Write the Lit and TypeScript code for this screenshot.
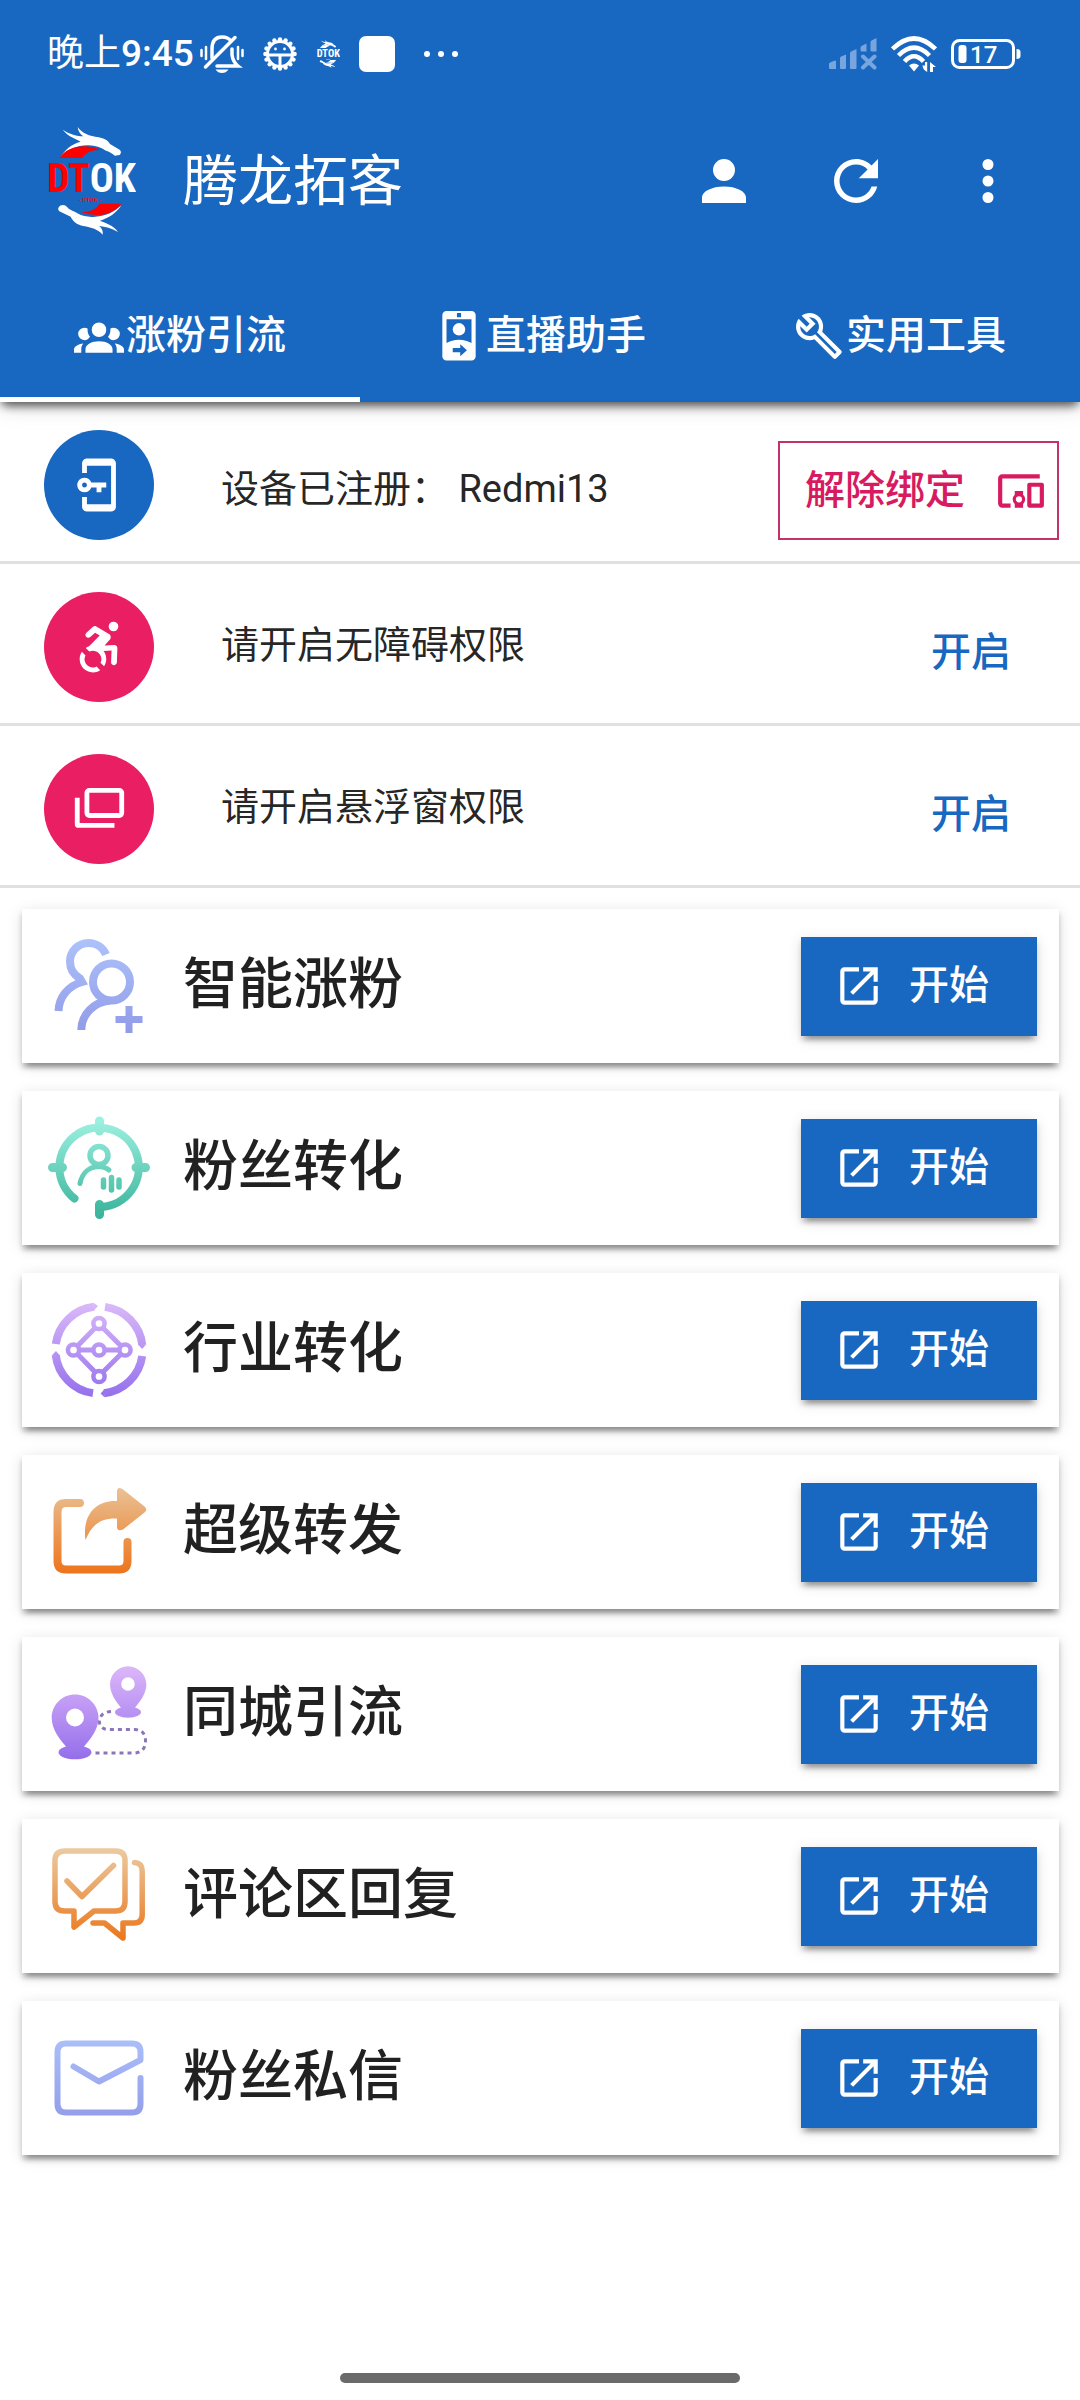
import { LitElement, html, svg, css, type SVGTemplateResult } from "lit";
import { customElement, state } from "lit/decorators.js";
import { classMap } from "lit/directives/class-map.js";

type Art = SVGTemplateResult;

/* ---------- 24-unit glyphs ---------- */

const glyphs: Record<string, Art> = {
  account: svg`<path d="M12 4A4 4 0 0 1 16 8A4 4 0 0 1 12 12A4 4 0 0 1 8 8A4 4 0 0 1 12 4M12 14C16.42 14 20 15.79 20 18V20H4V18C4 15.79 7.58 14 12 14Z"/>`,
  refresh: svg`<path d="M17.65 6.35C16.2 4.9 14.21 4 12 4A8 8 0 0 0 4 12A8 8 0 0 0 12 20C15.73 20 18.84 17.45 19.73 14H17.65C16.83 16.33 14.61 18 12 18A6 6 0 0 1 6 12A6 6 0 0 1 12 6C13.66 6 15.14 6.69 16.22 7.78L13 11H20V4L17.65 6.35Z"/>`,
  more: svg`<circle cx="12" cy="6" r="2"/><circle cx="12" cy="12" r="2"/><circle cx="12" cy="18" r="2"/>`,
  group: svg`<path d="M12,5.5A3.5,3.5 0 0,1 15.5,9A3.5,3.5 0 0,1 12,12.5A3.5,3.5 0 0,1 8.5,9A3.5,3.5 0 0,1 12,5.5M5,8C5.56,8 6.08,8.15 6.53,8.42C6.38,9.85 6.8,11.27 7.66,12.38C7.16,13.34 6.16,14 5,14A3,3 0 0,1 2,11A3,3 0 0,1 5,8M19,8A3,3 0 0,1 22,11A3,3 0 0,1 19,14C17.84,14 16.84,13.34 16.34,12.38C17.2,11.27 17.62,9.85 17.47,8.42C17.92,8.15 18.44,8 19,8M5.5,18.25C5.5,16.18 8.41,14.5 12,14.5C15.59,14.5 18.5,16.18 18.5,18.25V20H5.5V18.25M0,20V18.5C0,17.11 1.89,15.94 4.45,15.6C3.86,16.28 3.5,17.22 3.5,18.25V20H0M24,20H20.5V18.25C20.5,17.22 20.14,16.28 19.55,15.6C22.11,15.94 24,17.11 24,18.5V20Z"/>`,
  badge: svg`<path fill-rule="evenodd" d="M6 0H18A2 2 0 0 1 20 2V21.8A2 2 0 0 1 18 23.8H6A2 2 0 0 1 4 21.8V2A2 2 0 0 1 6 0M11 1V3H13V1ZM6 4V15.4C7.6 14.4 9.6 13.8 12 13.8S16.4 14.4 18 15.4V4ZM9 17.8V19.8H12.6V21.7L15.8 18.8L12.6 15.9V17.8Z"/><circle cx="12" cy="8.8" r="3"/>`,
  wrench: svg`<path d="M22.61 18.99l-9.08-9.08c.93-2.34.45-5.1-1.44-7C9.79.61 6.21.4 3.66 2.26L7.5 6.11 6.08 7.52 2.25 3.69C.39 6.23.6 9.82 2.9 12.11c1.86 1.86 4.57 2.35 6.89 1.48l9.11 9.11c.39.39 1.02.39 1.41 0l2.3-2.3c.4-.38.4-1.01 0-1.41zm-3 1.6l-9.46-9.46c-.61.45-1.29.72-2 .82-1.36.2-2.79-.21-3.83-1.25C3.37 9.76 2.93 8.5 3 7.26l3.09 3.09 4.24-4.24-3.09-3.09c1.24-.07 2.49.37 3.44 1.31 1.08 1.08 1.49 2.57 1.24 3.96-.12.71-.42 1.37-.88 1.96l9.45 9.45-.88.89z"/>`,
  key: svg`<path fill-rule="evenodd" d="M7 1C5.9 1 5 1.9 5 3V7H7V4H17V20H7V17H5V21C5 22.11 5.9 23 7 23H17C18.11 23 19 22.11 19 21V3C19 1.9 18.1 1 17 1H7M6 9C4.3 9 3 10.3 3 12S4.3 15 6 15C7.3 15 8.4 14.2 8.8 13H11V15H13V13H15V11H8.8C8.4 9.8 7.3 9 6 9M6 11C6.6 11 7 11.4 7 12S6.6 13 6 13S5 12.6 5 12S5.4 11 6 11Z"/>`,
  wheelchair: svg`<path d="M18.4,11.2L14.3,11.4L16.6,8.8C16.8,8.5 16.9,8 16.8,7.5C16.7,7.2 16.6,6.9 16.3,6.7L10.9,3.5C10.5,3.2 9.9,3.3 9.5,3.6L6.8,6.1C6.3,6.6 6.2,7.3 6.7,7.8C7.1,8.3 7.9,8.3 8.4,7.9L10.4,6.1L12.3,7.2L8.1,11.5C8,11.6 8,11.7 7.9,11.7C7.4,11.9 6.9,12.1 6.5,12.4L8,13.9C8.5,13.7 9,13.5 9.5,13.5C11.4,13.5 13,15.1 13,17C13,17.6 12.9,18.1 12.6,18.5L14.1,20C14.7,19.1 15,18.1 15,17C15,15.8 14.6,14.6 13.9,13.7L17.2,13.4L17,18.2C16.9,18.9 17.4,19.4 18.1,19.5H18.2C18.8,19.5 19.3,19 19.4,18.4L19.6,12.5C19.6,12.2 19.5,11.8 19.3,11.6C19,11.3 18.7,11.2 18.4,11.2M18,5.5A2,2 0 0,0 20,3.5A2,2 0 0,0 18,1.5A2,2 0 0,0 16,3.5A2,2 0 0,0 18,5.5M12.5,21.6C11.6,22.2 10.6,22.5 9.5,22.5C6.4,22.5 4,20.1 4,17C4,15.9 4.3,14.9 4.9,14L6.4,15.5C6.2,16 6,16.5 6,17C6,18.9 7.6,20.5 9.5,20.5C10.1,20.5 10.6,20.4 11,20.1L12.5,21.6Z"/>`,
  windows: svg`<g fill="none" stroke="currentColor" stroke-width="2"><rect x="7" y="4.3" width="14.4" height="10.4" rx="1"/><path d="M3 7.3V18.3Q3 18.8 3.5 18.8H18.4"/></g>`,
  devices: svg`<path fill-rule="evenodd" d="M3 6H21V4H3A2 2 0 0 0 1 6V18A2 2 0 0 0 3 20H7V18H3M13 12H9V13.78A3 3 0 0 0 8 16A3 3 0 0 0 9 18.22V20H13V18.22C13.61 17.67 14 16.88 14 16S13.61 14.33 13 13.78M11 17.5A1.5 1.5 0 1 1 12.5 16A1.5 1.5 0 0 1 11 17.5M22 8H16A1 1 0 0 0 15 9V19A1 1 0 0 0 16 20H22A1 1 0 0 0 23 19V9A1 1 0 0 0 22 8M21 18H17V10H21Z"/>`,
  open: svg`<path d="M14,3V5H17.59L7.76,14.83L9.17,16.24L19,6.41V10H21V3M19,19H5V5H12V3H5C3.89,3 3,3.9 3,5V19A2,2 0 0,0 5,21H19A2,2 0 0,0 21,19V12H19V19Z"/>`,
};

const glyph = (name: string, size: string) =>
  html`<svg class="glyph ${size}" viewBox="0 0 24 24" fill="currentColor" aria-hidden="true">${glyphs[name]}</svg>`;

/* ---------- brand mark ---------- */

const brand = (cls: string, red: string) => html`
  <svg class=${cls} viewBox="72 50 276 330" aria-hidden="true">
    <g fill="#fff">
      <path d="M120 146C134 122 154 104 182 97C170 88 146 84 128 61C148 75 172 80 190 81C180 74 174 64 173 53C186 72 208 80 236 84C252 87 262 92 270 104L300 122Q306 130 299 137L284 139C276 132 268 126 258 124C244 114 226 109 206 108C174 107 146 118 120 146Z"/>
      <path d="M304 288C290 310 268 326 240 334C252 340 280 346 294 368C274 356 256 352 238 350C246 358 250 366 248 376C234 360 214 354 190 350C172 346 160 338 152 322L118 306Q110 298 120 289Q134 284 142 294C150 304 164 306 172 312C190 322 208 324 226 322C258 320 284 308 304 288Z"/>
    </g>
    <g fill=${red}>
      <path d="M118 146C136 122 160 110 196 111Q222 112 244 122C218 122 200 126 186 146Z"/>
      <path d="M304 283C286 304 262 318 228 317Q204 317 184 308C208 308 226 302 238 283Z"/>
    </g>
    <text class="brand-word" x="209" y="249" text-anchor="end" fill=${red}>DT</text>
    <text class="brand-word" x="209" y="249" fill="#fff">OK</text>
    <text class="brand-sub" x="210" y="279" text-anchor="middle" fill=${red}>- DTOK -</text>
  </svg>`;

/* ---------- gradient feature artwork, 110-unit box ---------- */

const art: Record<string, { from: string; to: string; body: (paint: string) => Art }> = {
  fans: {
    from: "#adc2fb", to: "#919be8",
    body: (p) => svg`<g fill="none" stroke=${p} stroke-width="8">
      <path d="M62 23.5A19 19 0 0 0 44.5 12A18.5 18.5 0 0 0 26 30.5C26 38 30 44 36 47.5L38 51C24 55 15 66 14.5 80"/>
      <circle cx="67.500" cy="51" r="18.500"/>
      <path d="M66 69.500C50 71 37.500 83 37.300 99"/>
      <path stroke-width="7" d="M71.500 88.500H98.500M85 75V102"/></g>`,
  },
  target: {
    from: "#9cf0e0", to: "#3bb59c",
    body: (p) => svg`<g fill="none" stroke=${p} stroke-width="8" stroke-linecap="round">
      <path d="M30.500 85.500A39.700 39.700 0 1 1 57 94"/>
      <path stroke-width="9" d="M55.500 8V18M8.500 54.500H18.500M92 54.500H101.500M55.500 91.500V101.500"/>
      <circle cx="55" cy="42.500" r="9" stroke-width="5.500"/>
      <path stroke-width="5" d="M36 70.500C38 60 45 54 54 53.500C59 53.500 62 54.500 65 57"/>
      <path stroke-width="5.500" d="M59.500 67V74M67.500 64.500V77M75 67V74"/></g>`,
  },
  network: {
    from: "#dab9fa", to: "#9470ec",
    body: (p) => svg`<g fill="none" stroke=${p}>
      <g stroke-width="8">
        <path d="M11.800 49A43.500 43.500 0 0 1 50 11.800"/>
        <path d="M61 11.900A43.500 43.500 0 0 1 98.300 50"/>
        <path d="M98.200 61A43.500 43.500 0 0 1 60 98.200"/>
        <path d="M49 98.100A43.500 43.500 0 0 1 11.700 60"/>
      </g>
      <path stroke-width="5" d="M51 33L33.500 51M59 33L77 51M33.500 59L51 77M77 59L59 77M35 55H49M61 55H75"/>
      <g stroke-width="4.500"><circle cx="55" cy="28.500" r="5.600"/><circle cx="29.500" cy="55" r="5.600"/><circle cx="55" cy="55" r="5.600"/><circle cx="81" cy="55" r="5.600"/><circle cx="55" cy="81.500" r="5.600"/></g></g>
      <path fill=${p} d="M49.500 7.800L54 11L49.500 15.800ZM94.200 49.500L98 54L102.300 49.500ZM60.500 94.200L56.500 98.500L60.500 102.200ZM7.700 60.500L12 56L15.700 60.500Z"/>`,
  },
  share: {
    from: "#e9c49a", to: "#ee6f12",
    body: (p) => svg`<path fill="none" stroke=${p} stroke-width="8" stroke-linecap="round" d="M36 26H22Q13.500 26 13.500 35V84Q13.500 92.500 22 92.500H75Q83.500 92.500 83.500 84V65"/>
      <path fill=${p} d="M41.500 63C38 39 51 23 73 24V14Q73.500 9 78.500 12L100.500 29.500Q104 32.500 100.500 35.500L79 52.500Q73.500 55 73 50V41.500C57 41 48 47 41.500 63Z"/>`,
  },
  route: {
    from: "#dcb6fa", to: "#936dea",
    body: (p) => svg`<path fill="none" stroke="#8b76b8" stroke-width="3" stroke-dasharray="4 4" d="M67 52.500C52 53 52 70.500 64 70.500H91Q101.500 71 101.500 82T91 94H51"/>
      <path fill=${p} fill-rule="evenodd" d="M31 35.500C18 35.500 7.700 46 7.700 59C7.700 70 16 81 22 87.500A16.500 7 0 1 0 40 87.500C46 81 54.500 70 54.500 59C54.500 46 44 35.500 31 35.500M31 49.500A9 9 0 1 1 31 67.500A9 9 0 1 1 31 49.500"/>
      <path fill=${p} fill-rule="evenodd" d="M84 7.200C74 7.200 66 15.500 66 25.500C66 34 72 43 77 48.500A13 5.500 0 1 0 91 48.500C96 43 102.400 34 102.400 25.500C102.400 15.500 94 7.200 84 7.200M84 18.200A6.800 6.800 0 1 1 84 31.800A6.800 6.800 0 1 1 84 18.200"/>`,
  },
  comment: {
    from: "#ebcaa0", to: "#ea7418",
    body: (p) => svg`<g fill="none" stroke=${p} stroke-width="5.500" stroke-linecap="round" stroke-linejoin="round">
      <path d="M21 10H71.500Q81 10 81 19.500V60.500Q81 70 71.500 70H50L30 86V70H20.500Q11 70 11 60.500V19.500Q11 10 21 10Z"/>
      <path d="M23 40L38 55.500L69.500 24.500"/>
      <path d="M90.500 21.500Q98.200 22 98.200 30V73.500Q98.200 82 90 82H79V97L60.500 82H49"/></g>`,
  },
  mail: {
    from: "#adc2fb", to: "#919be8",
    body: (p) => svg`<g fill="none" stroke=${p} stroke-width="6" stroke-linejoin="round">
      <path stroke-linecap="round" d="M96.500 55V81Q96.500 89.500 88 89.500H22Q13.500 89.500 13.500 81V29Q13.500 20.500 22 20.500H88Q96.500 20.500 96.500 29V37L55 58.500L29.500 43.500"/></g>`,
  },
};

const artwork = (name: string) => {
  const { from, to, body } = art[name];
  const id = `paint-${name}`;
  return html`<svg class="artwork" viewBox="0 0 110 110" aria-hidden="true">
    <defs><linearGradient id=${id} gradientUnits="userSpaceOnUse" x1="0" y1="8" x2="0" y2="102">
      <stop offset="0" stop-color=${from} /><stop offset="1" stop-color=${to} />
    </linearGradient></defs>
    ${body(`url(#${id})`)}
  </svg>`;
};

/* ---------- system status bar ---------- */

const gearTeeth = Array.from({ length: 16 }, (_, i) => {
  const a = (i * Math.PI) / 8;
  return svg`<circle cx=${17 + 14.6 * Math.cos(a)} cy=${17 + 14.6 * Math.sin(a)} r="2.200" />`;
});

@customElement("status-bar")
export class StatusBar extends LitElement {
  static styles = css`
    :host {
      display: flex;
      align-items: center;
      justify-content: space-between;
      height: 108px;
      padding: 0 59px 0 47px;
      color: #fff;
      font-family: Roboto, "Noto Sans CJK SC", sans-serif;
    }
    .side { display: flex; align-items: center; gap: 19px; }
    .system { gap: 14px; }
    .clock { display: flex; align-items: center; gap: 6px; font-size: 37px; font-weight: 500; line-height: 44px; }
    .period { font-weight: 400; }
    .bell { width: 44px; height: 38px; }
    .gear { width: 34px; height: 34px; }
    .mini { width: 24px; height: 30px; }
    .app { width: 36px; height: 36px; border-radius: 7px; background: #fff; }
    .dots { width: 34px; height: 8px; margin-left: 10px; }
    .signal { width: 48px; height: 32px; }
    .wifi { width: 46px; height: 36px; }
    .battery { width: 70px; height: 32px; }
    .level { font: 500 24px Roboto, sans-serif; }
    .brand-word { font: 700 120px "Liberation Sans Narrow", "Roboto Condensed", sans-serif; }
    .brand-sub { font: 700 16px "Liberation Serif", serif; }
  `;

  render() {
    return html`
      <div class="side">
        <div class="clock">
          <time><span class="period">晚上</span>9:45</time>
          <svg class="bell" viewBox="0 0 44 38" fill="none" stroke="#fff" stroke-width="3.500" stroke-linecap="round" aria-hidden="true">
            <path d="M12 23V14Q12 2 22 2Q28 2 31 6M32 14V20Q33 27 38 31H17" />
            <path d="M5.500 32L35 2.500" />
            <path stroke-width="2.500" d="M1.500 15V21M6 12V24M38 12V24M42.500 15V21" />
            <path fill="#fff" stroke="none" d="M15.500 34.500H28.500Q26 38 22 38T15.500 34.500Z" />
          </svg>
        </div>
        <svg class="gear" viewBox="0 0 34 34" fill="#fff" aria-hidden="true">
          ${gearTeeth}
          <circle cx="17" cy="17" r="12.500" fill="none" stroke="#fff" stroke-width="3" />
          <path d="M5 16.500H29V19.500H5ZM15.500 18H18.500V30H15.500Z" />
          <circle cx="12.500" cy="12" r="1.400" /><circle cx="21.500" cy="12" r="1.400" />
        </svg>
        ${brand("mini", "#fff")}
        <span class="app"></span>
        <svg class="dots" viewBox="0 0 34 8" fill="#fff" aria-hidden="true">
          <circle cx="3" cy="4" r="3" /><circle cx="17" cy="4" r="3" /><circle cx="31" cy="4" r="3" />
        </svg>
      </div>
      <div class="side system">
        <svg class="signal" viewBox="0 0 48 32" fill="#78a5dd" aria-hidden="true">
          <path d="M0 26Q0 25 1 24.500L6 22.500Q7 22.500 7 23.500V31H1.500Q0 31 0 30ZM11 20.500Q11 19 12 18.500L17 16.500V30Q17 31 16 31H12Q11 31 11 30ZM21 15.500Q21 14 22 13.500L27.500 11V30Q27.500 31 26.500 31H22.500Q21 31 21 30ZM31.500 10Q31.500 8.500 32.500 8L37.500 5.500V13.500H33Q31.500 13.500 31.500 12ZM41.500 4.500Q41.500 3 42.500 2.500L47.500 0V13.500H43Q41.500 13.500 41.500 12Z" />
          <path fill="none" stroke="#78a5dd" stroke-width="4" stroke-linecap="round" d="M34 18.500L45.500 29.500M45.500 18.500L34 29.500" />
        </svg>
        <svg class="wifi" viewBox="0 0 46 36" fill="none" stroke="#fff" stroke-width="4.500" aria-hidden="true">
          <path d="M1.500 13Q23-8 44.500 13" /><path d="M7.500 19.500Q23 4 38.500 19.500" /><path d="M13.500 25.500Q23 15 32.500 25.500" />
          <path fill="#fff" stroke="none" d="M18 29.500Q23 25.500 28 29.500L23 35.500ZM36.200 26V36Q32 34 31.500 29.500H34V26ZM39 36V26L45 31H42V36Z" />
        </svg>
        <svg class="battery" viewBox="0 0 70 32" fill="#fff" aria-hidden="true">
          <rect x="1.500" y="2.500" width="61" height="27" rx="7" fill="none" stroke="#fff" stroke-width="3" />
          <rect x="7.500" y="7" width="8" height="18" rx="3" />
          <path d="M65.500 11Q69.500 11 69.500 14V18Q69.500 21 65.500 21Z" />
          <text class="level" x="19" y="24.500">17</text>
        </svg>
      </div>`;
  }
}

/* ---------- page ---------- */

interface Tab { icon: string; label: string }
interface Notice { icon: string; text: string; action: string; registered: boolean }
interface Feature { art: string; title: string }

const tabs: Tab[] = [
  { icon: "group", label: "涨粉引流" },
  { icon: "badge", label: "直播助手" },
  { icon: "wrench", label: "实用工具" },
];

const notices: Notice[] = [
  { icon: "key", text: "设备已注册： Redmi13", action: "解除绑定", registered: true },
  { icon: "wheelchair", text: "请开启无障碍权限", action: "开启", registered: false },
  { icon: "windows", text: "请开启悬浮窗权限", action: "开启", registered: false },
];

const features: Feature[] = [
  { art: "fans", title: "智能涨粉" },
  { art: "target", title: "粉丝转化" },
  { art: "network", title: "行业转化" },
  { art: "share", title: "超级转发" },
  { art: "route", title: "同城引流" },
  { art: "comment", title: "评论区回复" },
  { art: "mail", title: "粉丝私信" },
];

@customElement("app-root")
export class AppRoot extends LitElement {
  @state() private active = 0;

  static styles = css`
    :host {
      --primary: #1867c0;
      --accent: #e91e63;
      display: flex;
      flex-direction: column;
      min-height: 100vh;
      background: #fff;
      color: rgba(0, 0, 0, 0.87);
      font-family: Roboto, "Noto Sans CJK SC", sans-serif;
    }
    button {
      display: inline-flex;
      align-items: center;
      margin: 0;
      padding: 0;
      border: 0;
      background: none;
      color: inherit;
      font: inherit;
      cursor: pointer;
    }
    h1, h2, p { margin: 0; }
    .glyph { display: block; flex: none; }
    .lg { width: 66px; height: 66px; }
    .md { width: 58px; height: 58px; }
    .sm { width: 50px; height: 50px; }

    .top {
      background: var(--primary);
      color: #fff;
      box-shadow: 0 6px 11px -3px rgba(0, 0, 0, 0.5), 0 5px 8px -2px rgba(0, 0, 0, 0.35), 0 3px 27px rgba(0, 0, 0, 0.1);
    }
    .toolbar { display: flex; align-items: center; height: 146px; padding: 0 26px 0 44px; }
    .logo { width: 92px; height: 110px; }
    .title { flex: 1; margin-left: 47px; font-size: 55px; font-weight: 400; line-height: 72px; }
    .tool { justify-content: center; width: 132px; height: 132px; }
    .brand-word { font: 700 120px "Liberation Sans Narrow", "Roboto Condensed", sans-serif; }
    .brand-sub { font: 700 16px "Liberation Serif", serif; }

    .tabs { display: grid; grid-template-columns: repeat(3, 1fr); margin-top: 16px; }
    .tab {
      justify-content: center;
      gap: 2px;
      height: 132px;
      box-sizing: border-box;
      border: solid transparent;
      border-width: 5px 0;
      font-size: 40px;
      font-weight: 500;
      line-height: 52px;
    }
    .tab.active { border-bottom-color: #fff; }

    .notice {
      display: flex;
      align-items: center;
      gap: 67px;
      padding: 28px 21px 21px 44px;
      border-bottom: 3px solid #e0e0e0;
    }
    .avatar {
      display: grid;
      place-items: center;
      flex: none;
      width: 110px;
      height: 110px;
      border-radius: 50%;
      background: var(--accent);
      color: #fff;
    }
    .avatar.registered { background: var(--primary); }
    .message { flex: 1; padding-bottom: 4px; font-size: 38px; line-height: 52px; }
    .message.registered { padding: 8px 0 0; }
    .action {
      align-self: flex-end;
      height: 99px;
      padding: 0 48px;
      color: var(--primary);
      font-size: 40px;
      font-weight: 500;
      line-height: 52px;
    }
    .action.outlined {
      gap: 31px;
      padding: 0 11px 0 25px;
      border: 2px solid #c2326c;
      color: #d81b60;
    }

    .features { display: flex; flex-direction: column; gap: 28px; padding: 21px 21px 22px 22px; }
    .card {
      display: flex;
      align-items: center;
      gap: 29px;
      padding: 22px;
      background: #fff;
      box-shadow: 0 8px 5px -5px rgba(0, 0, 0, 0.26), 0 5px 5px rgba(0, 0, 0, 0.2), 0 3px 14px rgba(0, 0, 0, 0.13);
    }
    .artwork { flex: none; width: 110px; height: 110px; }
    .name { flex: 1; padding-bottom: 4px; font-size: 55px; font-weight: 500; line-height: 72px; }
    .start {
      gap: 25px;
      height: 99px;
      padding: 0 48px 0 33px;
      background: var(--primary);
      color: #fff;
      font-size: 40px;
      font-weight: 500;
      line-height: 52px;
      box-shadow: 0 8px 5px -5px rgba(0, 0, 0, 0.26), 0 5px 5px rgba(0, 0, 0, 0.14), 0 3px 14px rgba(0, 0, 0, 0.12);
    }
    .home { width: 37%; height: 10px; margin: auto auto 17px; border-radius: 5px; background: #6a6a6a; }
  `;

  private renderNotice(n: Notice) {
    return html`<section class="notice">
      <span class=${classMap({ avatar: true, registered: n.registered })}>${glyph(n.icon, "md")}</span>
      <p class=${classMap({ message: true, registered: n.registered })}>${n.text}</p>
      <button class=${classMap({ action: true, outlined: n.registered })} type="button">
        ${n.action}${n.registered ? glyph("devices", "sm") : null}
      </button>
    </section>`;
  }

  render() {
    return html`
      <header class="top">
        <status-bar></status-bar>
        <div class="toolbar">
          ${brand("logo", "#f00")}
          <h1 class="title">腾龙拓客</h1>
          <button class="tool" type="button" aria-label="账号">${glyph("account", "lg")}</button>
          <button class="tool" type="button" aria-label="刷新">${glyph("refresh", "lg")}</button>
          <button class="tool" type="button" aria-label="更多">${glyph("more", "lg")}</button>
        </div>
        <nav class="tabs" role="tablist">
          ${tabs.map((t, i) => html`<button
            class=${classMap({ tab: true, active: i === this.active })}
            type="button"
            role="tab"
            aria-selected=${i === this.active}
            @click=${() => (this.active = i)}
          >${glyph(t.icon, "sm")}<span>${t.label}</span></button>`)}
        </nav>
      </header>
      <main>
        ${notices.map((n) => this.renderNotice(n))}
        <div class="features">
          ${features.map((f) => html`<article class="card">
            ${artwork(f.art)}
            <h2 class="name">${f.title}</h2>
            <button class="start" type="button">${glyph("open", "sm")}<span>开始</span></button>
          </article>`)}
        </div>
      </main>
      <div class="home"></div>`;
  }
}
